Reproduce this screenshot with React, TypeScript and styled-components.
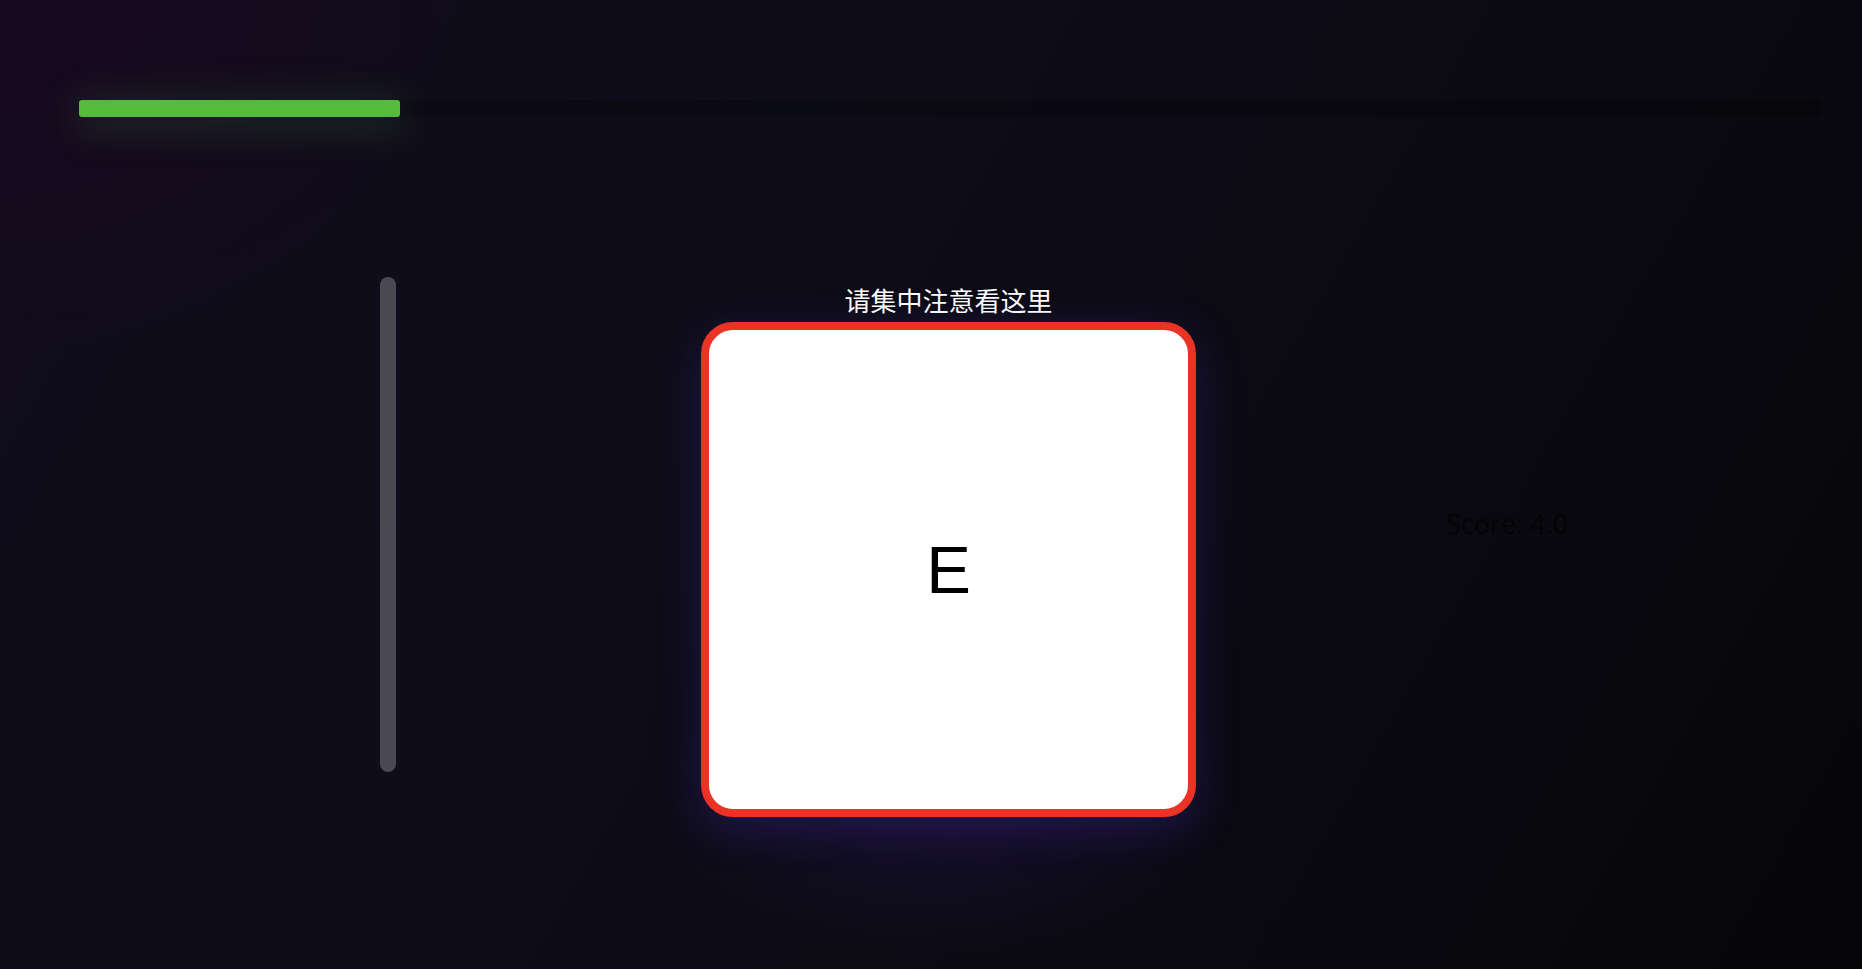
import React from "react";
import styled, { createGlobalStyle } from "styled-components";

const Global = createGlobalStyle`
  html, body { margin: 0; padding: 0; }
  body {
    background: #0c0b14;
    font-family: "Noto Sans", "Noto Sans CJK SC", sans-serif;
  }
`;

const Page = styled.div`
  width: 1862px;
  height: 969px;
  box-sizing: border-box;
  overflow: hidden;
  padding: 100px 41px 0 79px;
  display: flex;
  flex-direction: column;
  background:
    radial-gradient(ellipse 420px 220px at 950px 800px, rgba(40, 22, 90, 0.35), transparent 70%),
    radial-gradient(ellipse 700px 500px at 0px 0px, rgba(30, 6, 36, 0.6), transparent 70%),
    linear-gradient(120deg, #110c1c 0%, #0e0d18 35%, #0c0b14 60%, #060609 100%);
`;

const Track = styled.div`
  height: 17px;
  border-radius: 3px;
  background: rgba(0, 0, 0, 0.22);
  position: relative;
`;

const Fill = styled.div`
  height: 100%;
  border-radius: 3px;
  background: #55bb3a;
  box-shadow: 0 6px 40px 4px rgba(85, 187, 58, 0.22);
`;

const Stage = styled.div`
  margin-top: 160px;
  display: flex;
  align-items: flex-start;
  padding-left: 301px;
`;

const SideBar = styled.div`
  width: 16px;
  height: 495px;
  border-radius: 8px;
  background: #4a4952;
  flex-shrink: 0;
`;

const Column = styled.div`
  margin-left: 305px;
  width: 495px;
  display: flex;
  flex-direction: column;
  align-items: center;
`;

const Prompt = styled.div`
  height: 45px;
  display: flex;
  align-items: center;
  justify-content: center;
  color: #ffffff;
  font-family: "Noto Sans CJK SC", "Noto Sans", sans-serif;
  font-size: 26px;
  line-height: 1;
`;

const Card = styled.div`
  width: 495px;
  height: 495px;
  box-sizing: border-box;
  border: 8px solid #ea3324;
  border-radius: 32px;
  background: #ffffff;
  display: flex;
  align-items: center;
  justify-content: center;
  box-shadow: 0 12px 44px rgba(70, 40, 170, 0.32);
`;

const Letter = styled.span`
  font-family: "Liberation Sans", Arial, sans-serif;
  font-size: 67px;
  line-height: 1;
  color: #000000;
`;

const Score = styled.div`
  margin-left: 250px;
  margin-top: 229px;
  font-family: "Open Sans", "Noto Sans", sans-serif;
  font-size: 27px;
  line-height: 36px;
  color: #040406;
  white-space: nowrap;
`;

export default function App() {
  const progress = 18.4;
  return (
    <>
      <Global />
      <Page>
        <Track>
          <Fill style={{ width: `${progress}%` }} />
        </Track>
        <Stage>
          <SideBar />
          <Column>
            <Prompt>请集中注意看这里</Prompt>
            <Card>
              <Letter>E</Letter>
            </Card>
          </Column>
          <Score>Score: 4.0</Score>
        </Stage>
      </Page>
    </>
  );
}
